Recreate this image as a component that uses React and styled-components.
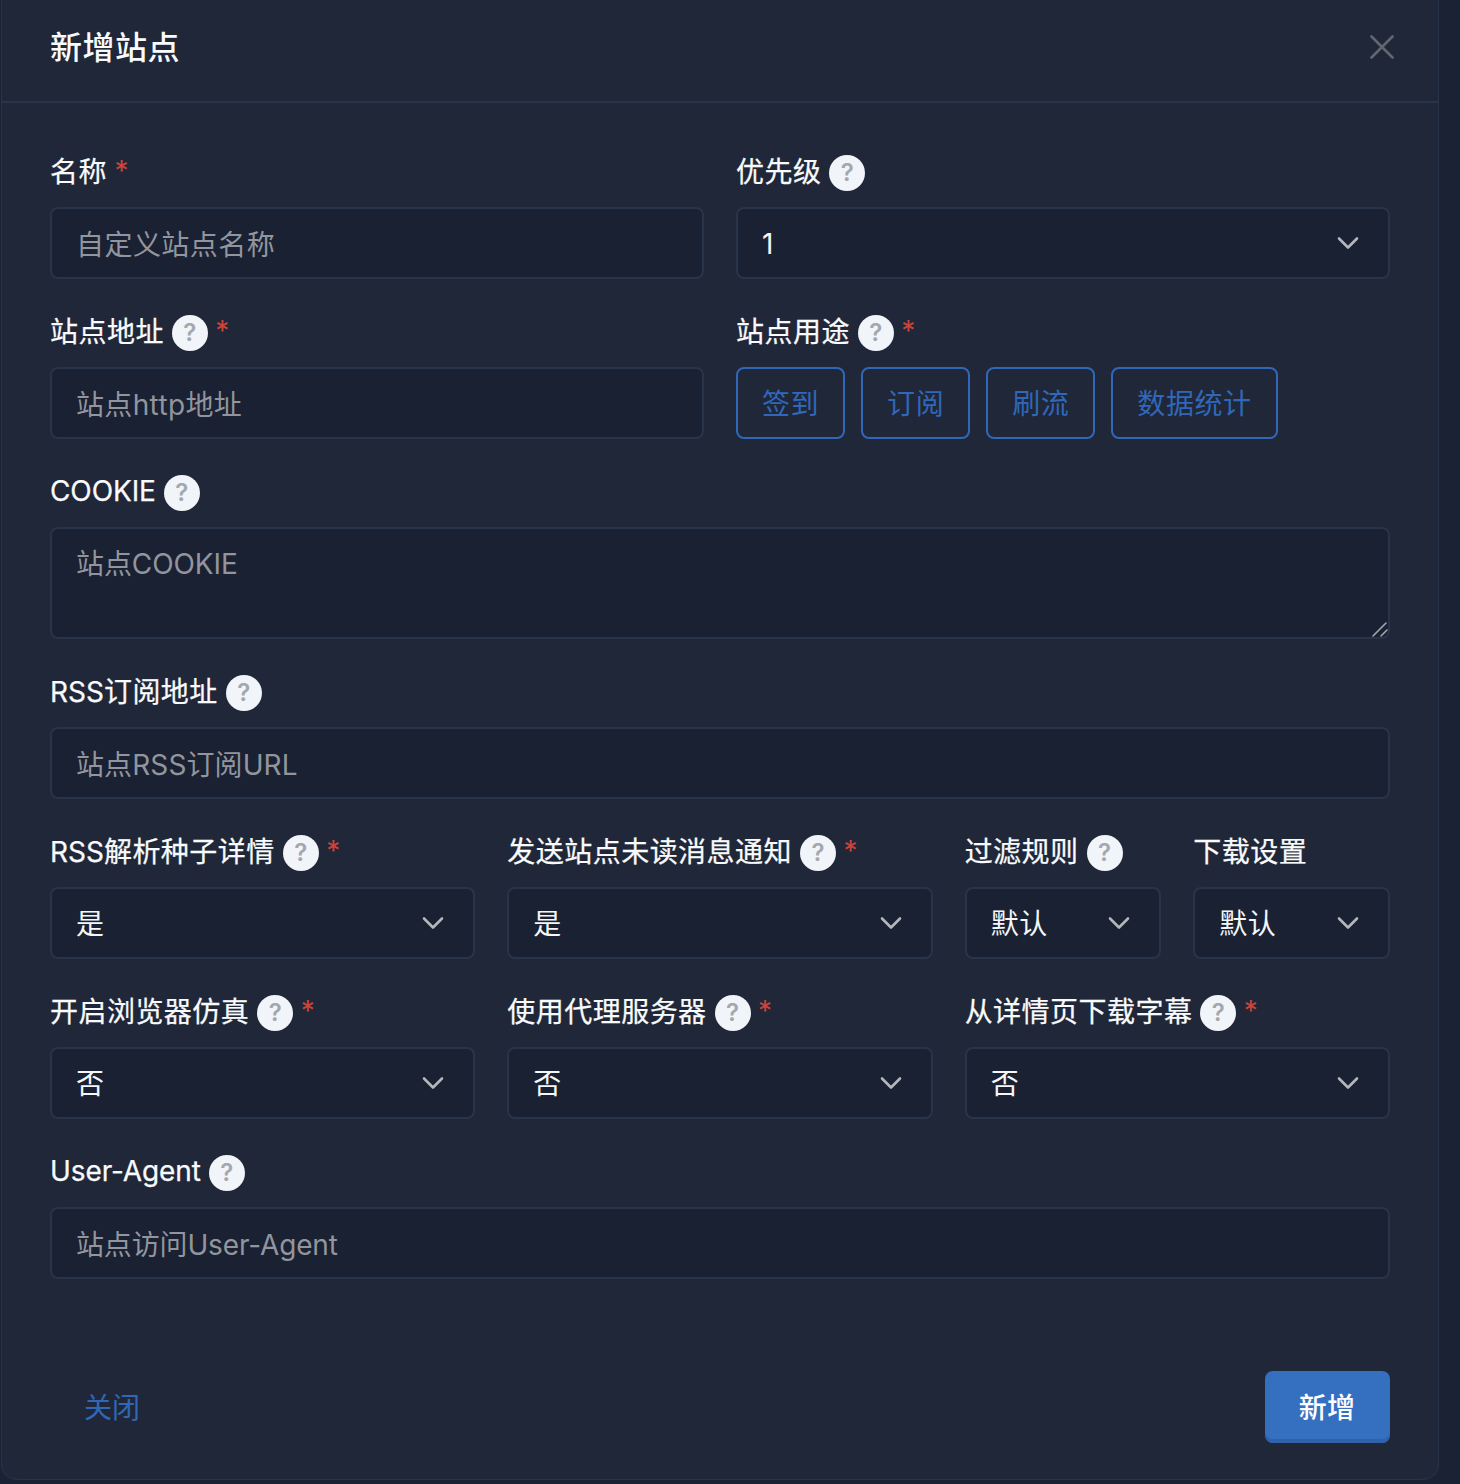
import React from 'react'
import styled, { createGlobalStyle } from 'styled-components'

const chevron =
  "data:image/svg+xml,%3csvg xmlns='http://www.w3.org/2000/svg' viewBox='0 0 16 16'%3e%3cpath fill='none' stroke='%23b4b6bb' stroke-linecap='round' stroke-linejoin='round' stroke-width='1.3' d='M3.5 5.75l4.5 4.5 4.5-4.5'/%3e%3c/svg%3e"

const fonts = `Inter, "Noto Sans CJK SC", sans-serif`

const GlobalStyle = createGlobalStyle`
  html, body {
    margin: 0;
    padding: 0;
    background: #1b2234;
  }
  body {
    font-family: ${fonts};
    font-size: 28px;
    color: #f8fafc;
  }
  * {
    box-sizing: border-box;
  }
`

const Page = styled.div`
  width: 1460px;
  height: 1484px;
  padding-left: 1px;
  overflow: hidden;
`

const Modal = styled.div`
  width: 1438px;
  height: 1480px;
  background: #202738;
  border: 1px solid #28344a;
  border-top: 0;
  border-radius: 0 0 16px 16px;
  display: flex;
  flex-direction: column;
`

const Header = styled.div`
  height: 103px;
  padding: 0 44px 7px 48px;
  display: flex;
  align-items: center;
  justify-content: space-between;
  border-bottom: 2px solid #28344a;
`

const Title = styled.div`
  padding-top: 2px;
  font-size: 32px;
  font-weight: 500;
  line-height: 40px;
  letter-spacing: 0.5px;
`

const CloseIcon = styled.svg`
  width: 24px;
  height: 24px;
  stroke: #61666f;
  stroke-width: 2.6;
  stroke-linecap: round;
  fill: none;
`

const Body = styled.div`
  padding: 48px 48px 0;
  display: grid;
  grid-template-columns: repeat(12, minmax(0, 1fr));
  column-gap: 32px;
  row-gap: 32px;
`

const Field = styled.div`
  grid-column: span ${(props) => props.$span};
  min-width: 0;
`

const Label = styled.div`
  height: 40px;
  margin-bottom: 16px;
  display: flex;
  align-items: center;
  font-size: 28px;
  line-height: 40px;
  white-space: nowrap;
  color: #f8fafc;
`

const LabelText = styled.span`
  padding-top: ${(props) => (props.$latin ? 0 : 2)}px;
  letter-spacing: ${(props) => (props.$latin ? -0.1 : 0.46)}px;
  -webkit-text-stroke: 0.25px currentColor;
`

const Latin = styled.span`
  letter-spacing: 0;
`

const Help = styled.span`
  width: 36px;
  height: 36px;
  margin-left: 8px;
  margin-top: 3px;
  flex: none;
  border-radius: 50%;
  background: #f1f5f9;
  color: #a3a7ae;
  font-size: 24px;
  font-weight: 600;
  line-height: 36px;
  text-align: center;
`

const Star = styled.span`
  margin-left: 7.5px;
  margin-top: -1px;
  color: #c9453b;
  font-size: 28px;
  line-height: 40px;
`

const controlStyle = `
  display: block;
  width: 100%;
  padding: 0 24px;
  font-family: ${fonts};
  font-size: 28px;
  color: #f4f6f8;
  background-color: #1a2132;
  border: 2px solid #28344a;
  border-radius: 8px;
  outline: none;
`

const Input = styled.input`
  ${controlStyle}
  height: 72px;
  padding-top: 4px;
  &::placeholder {
    color: #92959d;
    opacity: 1;
    letter-spacing: ${(props) => props.$tracking}px;
  }
`

const TextAreaWrap = styled.div`
  position: relative;
`

const TextArea = styled.textarea`
  ${controlStyle}
  height: 112px;
  padding-top: 15px;
  line-height: 40px;
  resize: none;
  &::placeholder {
    color: #92959d;
    opacity: 1;
    letter-spacing: ${(props) => props.$tracking}px;
  }
`

const Grip = styled.svg`
  position: absolute;
  right: 2px;
  bottom: 2px;
  width: 16px;
  height: 16px;
  stroke: #a3a6ac;
  stroke-width: 1.6;
  stroke-linecap: round;
  pointer-events: none;
`

const Select = styled.select`
  ${controlStyle}
  height: 72px;
  padding-top: 2px;
  padding-right: 60px;
  letter-spacing: 0.5px;
  appearance: none;
  background-image: url("${chevron}");
  background-repeat: no-repeat;
  background-position: right 24px center;
  background-size: 32px 32px;
`

const Chips = styled.div`
  display: flex;
  gap: 16px;
`

const Chip = styled.div`
  height: 72px;
  padding: 0 24px 2px;
  display: flex;
  align-items: center;
  border: 2px solid #3067b8;
  border-radius: 8px;
  color: #3067b8;
  font-size: 28px;
  letter-spacing: 0.55px;
`

const Footer = styled.div`
  margin-top: auto;
  padding: 0 48px 36px;
  display: flex;
  align-items: center;
  justify-content: space-between;
`

const LinkButton = styled.div`
  height: 72px;
  padding: 0 34px 2px;
  display: flex;
  align-items: center;
  color: #3067b8;
  font-size: 28px;
`

const PrimaryButton = styled.div`
  width: 125px;
  height: 72px;
  padding: 0 1px 2px 0;
  display: flex;
  align-items: center;
  justify-content: center;
  background: #3570c0;
  border-radius: 8px;
  box-shadow: inset 0 -4px 0 #2f62ab;
  color: #ffffff;
  font-size: 28px;
  font-weight: 500;
  letter-spacing: 0.3px;
`

function FieldLabel({ children, latin, help, required }) {
  return (
    <Label>
      <LabelText $latin={latin}>{children}</LabelText>
      {help && <Help>?</Help>}
      {required && <Star>*</Star>}
    </Label>
  )
}

function SelectField({ span, label, help, required, value }) {
  return (
    <Field $span={span}>
      <FieldLabel help={help} required={required}>{label}</FieldLabel>
      <Select defaultValue={value}>
        <option value={value}>{value}</option>
      </Select>
    </Field>
  )
}

const usages = ['签到', '订阅', '刷流', '数据统计']

export default function App() {
  return (
    <Page>
      <GlobalStyle />
      <Modal>
        <Header>
          <Title>新增站点</Title>
          <CloseIcon viewBox="0 0 24 24">
            <path d="M1.5 1.5l21 21M22.5 1.5l-21 21" />
          </CloseIcon>
        </Header>
        <Body>
          <Field $span={6}>
            <FieldLabel required>名称</FieldLabel>
            <Input placeholder="自定义站点名称" $tracking={0.45} />
          </Field>
          <SelectField span={6} label="优先级" help value="1" />
          <Field $span={6}>
            <FieldLabel help required>站点地址</FieldLabel>
            <Input placeholder="站点http地址" $tracking={0.35} />
          </Field>
          <Field $span={6}>
            <FieldLabel help required>站点用途</FieldLabel>
            <Chips>
              {usages.map((usage) => (
                <Chip key={usage}>{usage}</Chip>
              ))}
            </Chips>
          </Field>
          <Field $span={12}>
            <FieldLabel latin help>COOKIE</FieldLabel>
            <TextAreaWrap>
              <TextArea placeholder="站点COOKIE" $tracking={-0.1} />
              <Grip viewBox="0 0 16 16">
                <path d="M1 15L14 2M9 15l6-6" />
              </Grip>
            </TextAreaWrap>
          </Field>
          <Field $span={12}>
            <FieldLabel help><Latin>RSS</Latin>订阅地址</FieldLabel>
            <Input placeholder="站点RSS订阅URL" $tracking={0.1} />
          </Field>
          <SelectField span={4} label={<><Latin>RSS</Latin>解析种子详情</>} help required value="是" />
          <SelectField span={4} label="发送站点未读消息通知" help required value="是" />
          <SelectField span={2} label="过滤规则" help value="默认" />
          <SelectField span={2} label="下载设置" value="默认" />
          <SelectField span={4} label="开启浏览器仿真" help required value="否" />
          <SelectField span={4} label="使用代理服务器" help required value="否" />
          <SelectField span={4} label="从详情页下载字幕" help required value="否" />
          <Field $span={12}>
            <FieldLabel latin help>User-Agent</FieldLabel>
            <Input placeholder="站点访问User-Agent" $tracking={-0.15} />
          </Field>
        </Body>
        <Footer>
          <LinkButton>关闭</LinkButton>
          <PrimaryButton>新增</PrimaryButton>
        </Footer>
      </Modal>
    </Page>
  )
}
